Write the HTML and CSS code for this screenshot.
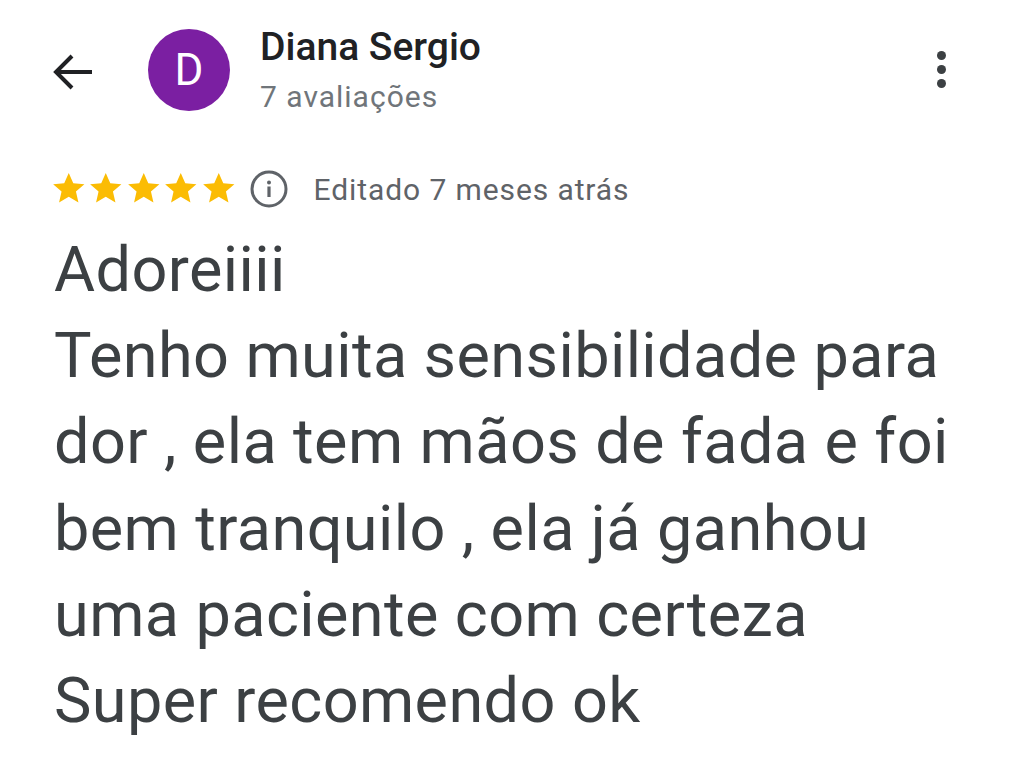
FILE: index.html
```html
<!DOCTYPE html>
<html lang="pt">
<head>
<meta charset="utf-8">
<link rel="stylesheet" href="styles.css">
</head>
<body>
<div class="page">
  <header class="header">
    <svg class="back" viewBox="0 0 42 36" width="42" height="36"><path d="M40 18H4M20 2L4 18l16 16" fill="none" stroke="#202124" stroke-width="4" stroke-linejoin="miter"/></svg>
    <div class="avatar">D</div>
    <div class="who">
      <div class="name">Diana Sergio</div>
      <div class="count">7 avaliações</div>
    </div>
    <div class="more"><span></span><span></span><span></span></div>
  </header>
  <div class="meta">
    <div class="stars">
      <svg viewBox="0 0 24 24"><path d="M12 2.5l2.9 6.6 7.1.6-5.4 4.7 1.6 7-6.2-3.7-6.2 3.7 1.6-7L2 9.7l7.1-.6z" fill="#fbbc04"/></svg>
      <svg viewBox="0 0 24 24"><path d="M12 2.5l2.9 6.6 7.1.6-5.4 4.7 1.6 7-6.2-3.7-6.2 3.7 1.6-7L2 9.7l7.1-.6z" fill="#fbbc04"/></svg>
      <svg viewBox="0 0 24 24"><path d="M12 2.5l2.9 6.6 7.1.6-5.4 4.7 1.6 7-6.2-3.7-6.2 3.7 1.6-7L2 9.7l7.1-.6z" fill="#fbbc04"/></svg>
      <svg viewBox="0 0 24 24"><path d="M12 2.5l2.9 6.6 7.1.6-5.4 4.7 1.6 7-6.2-3.7-6.2 3.7 1.6-7L2 9.7l7.1-.6z" fill="#fbbc04"/></svg>
      <svg viewBox="0 0 24 24"><path d="M12 2.5l2.9 6.6 7.1.6-5.4 4.7 1.6 7-6.2-3.7-6.2 3.7 1.6-7L2 9.7l7.1-.6z" fill="#fbbc04"/></svg>
    </div>
    <svg class="info" viewBox="0 0 40 40" width="40" height="40"><circle cx="20" cy="20" r="17" fill="none" stroke="#5f6368" stroke-width="3"/><circle cx="20" cy="13.5" r="2" fill="#5f6368"/><rect x="18.4" y="17.5" width="3.2" height="10.5" fill="#5f6368"/></svg>
    <span class="edited">Editado 7 meses atrás</span>
  </div>
  <p class="review">Adoreiiii<br>Tenho muita sensibilidade para dor , ela tem mãos de fada e foi bem tranquilo , ela já ganhou uma paciente com certeza<br>Super recomendo ok</p>
</div>
</body>
</html>
```

FILE: styles.css
```css
html, body {
  margin: 0;
  padding: 0;
  background: #ffffff;
}
body {
  font-family: Roboto, "Liberation Sans", sans-serif;
  width: 1024px;
  height: 772px;
  overflow: hidden;
}
.page {
  padding: 0 52px;
}
.header {
  display: flex;
  align-items: flex-start;
  height: 138px;
}
.back {
  margin-top: 54px;
  flex: none;
}
.avatar {
  flex: none;
  width: 82px;
  height: 82px;
  margin-top: 29px;
  margin-left: 54px;
  border-radius: 50%;
  background: #7b1fa2;
  color: #ffffff;
  font-size: 44px;
  line-height: 82px;
  text-align: center;
}
.who {
  margin-left: 30px;
  flex: 1;
}
.name {
  margin-top: 27px;
  font-size: 39px;
  font-weight: 500;
  color: #202124;
  line-height: 40px;
}
.count {
  margin-top: 12px;
  font-size: 30px;
  letter-spacing: 1px;
  color: #70757a;
  line-height: 36px;
}
.more {
  display: flex;
  flex-direction: column;
  gap: 5px;
  margin-top: 51px;
  margin-right: 26px;
}
.more span {
  width: 9px;
  height: 9px;
  border-radius: 50%;
  background: #3c4043;
}
.meta {
  display: flex;
  align-items: center;
  height: 40px;
  margin-top: 31px;
}
.stars {
  display: flex;
  margin-left: -2.4px;
}
.stars svg {
  width: 37.5px;
  height: 37.5px;
  margin-top: -2px;
}
.info {
  margin-left: 11.5px;
}
.edited {
  margin-left: 25px;
  font-size: 30px;
  letter-spacing: 0.9px;
  color: #5f6368;
}
.review {
  margin: 18px 0 0 2px;
  font-size: 63px;
  letter-spacing: 0.4px;
  line-height: 86.2px;
  color: #3c4043;
}
```
